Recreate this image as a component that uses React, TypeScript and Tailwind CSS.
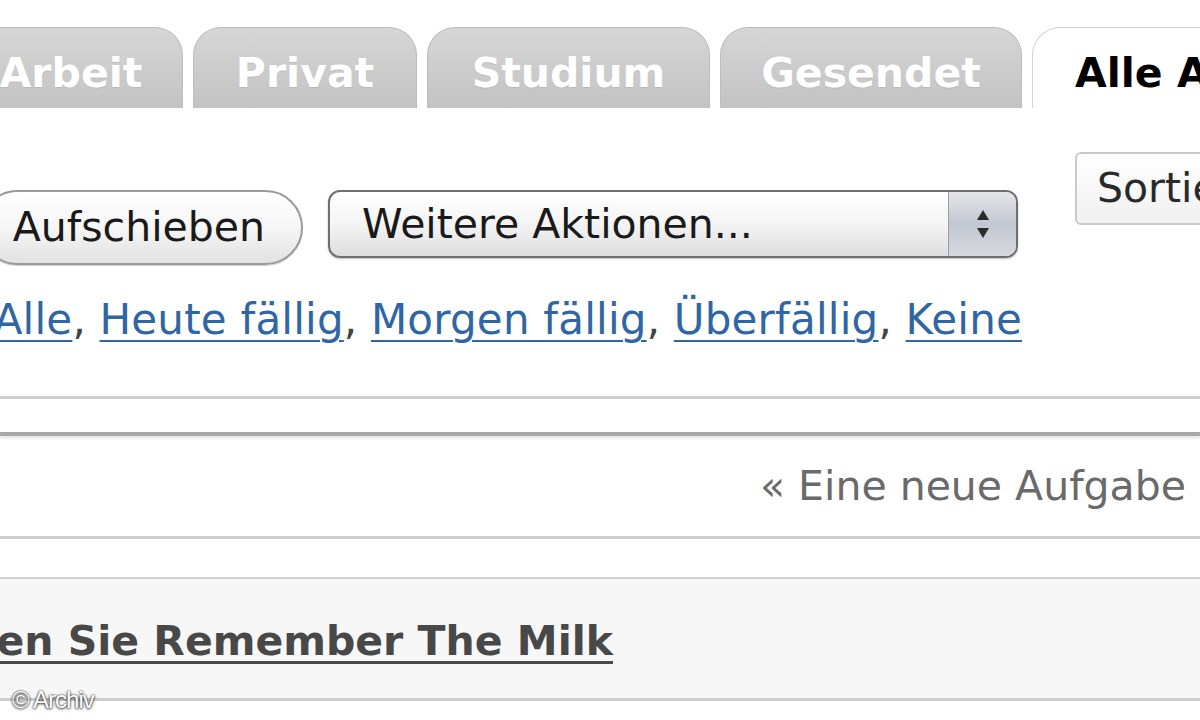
import React from 'react';

const tabs = [
  { label: 'Arbeit', w: 'w-[224px]' },
  { label: 'Privat', w: 'w-[224px]' },
  { label: 'Studium', w: 'w-[283px]' },
  { label: 'Gesendet', w: 'w-[302px]' },
];

const filters = ['Alle', 'Heute fällig', 'Morgen fällig', 'Überfällig', 'Keine'];

function Stepper() {
  return (
    <div className="w-[68px] h-full flex items-center justify-center border-l border-[#9a9ea6] bg-gradient-to-b from-[#e4e6ea] via-[#c3c7cf] to-[#d6d9de]">
      <svg width="18" height="34" viewBox="0 0 18 34">
        <path d="M9 3 L15 13 L3 13 Z" fill="#2b2b2b" />
        <path d="M3 21 L15 21 L9 31 Z" fill="#2b2b2b" />
      </svg>
    </div>
  );
}

export default function App() {
  return (
    <div
      className="relative w-[1200px] h-[720px] bg-white overflow-hidden"
      style={{ fontFamily: '"DejaVu Sans", Verdana, sans-serif' }}
    >
      {/* tab bar */}
      <div className="flex gap-[10px] pt-[27px] -ml-[41px] h-[108px]">
        {tabs.map((t) => (
          <div
            key={t.label}
            className={`${t.w} shrink-0 h-[81px] rounded-t-[28px] border border-b-0 border-[#bdbdbd] bg-gradient-to-b from-[#d6d6d6] to-[#c3c3c3] flex items-center justify-center pt-[10px]`}
          >
            <span className="text-[41px] font-bold text-white leading-none whitespace-nowrap [text-shadow:0_1px_1px_rgba(0,0,0,0.08)]">
              {t.label}
            </span>
          </div>
        ))}
        <div className="w-[300px] shrink-0 h-[81px] rounded-t-[28px] border border-b-0 border-[#d2d2d2] bg-white flex items-center pl-[42px] pt-[10px]">
          <span className="text-[41px] font-bold text-black leading-none whitespace-nowrap">Alle Aufgaben</span>
        </div>
      </div>

      {/* actions */}
      <div className="flex items-start">
        <div className="flex flex-col pt-[82px]">
          <div className="flex gap-[25px] -ml-[20px]">
            <div className="w-[323px] h-[75px] shrink-0 rounded-full border-2 border-[#9a9a9a] bg-gradient-to-b from-white via-[#f6f6f6] to-[#e2e2e2] shadow-[0_1px_1px_rgba(0,0,0,0.2)] flex items-center justify-end pr-[36px]">
              <span className="text-[41px] text-[#1a1a1a] leading-none whitespace-nowrap">Aufschieben</span>
            </div>
            <div className="w-[690px] h-[68px] shrink-0 rounded-[12px] border-2 border-[#6f6f6f] bg-gradient-to-b from-white via-[#f4f4f4] to-[#dedede] shadow-[0_1px_2px_rgba(0,0,0,0.25)] flex items-center overflow-hidden">
              <span className="flex-1 pl-[32px] text-[41px] text-[#1a1a1a] leading-none whitespace-nowrap">
                Weitere Aktionen...
              </span>
              <Stepper />
            </div>
          </div>
          <div className="w-[1022px] h-[50px] mt-[30px] flex justify-end">
            <p className="shrink-0 whitespace-nowrap text-[42px] tracking-[0.2px] leading-[50px] text-[#444]">
              {filters.map((f, i) => (
                <React.Fragment key={f}>
                  <a className="text-[#2f66a3] underline decoration-2 underline-offset-[6px]">{f}</a>
                  {i < filters.length - 1 ? ', ' : ''}
                </React.Fragment>
              ))}
            </p>
          </div>
        </div>
        <div className="ml-[53px] mt-[44px] shrink-0 w-[220px] h-[73px] rounded-[6px] border-2 border-[#cacaca] bg-gradient-to-b from-white to-[#f1f1f1] flex items-center pl-[20px]">
          <span className="text-[41px] text-[#2a2a2a] leading-none whitespace-nowrap">Sortieren</span>
        </div>
      </div>

      {/* list area */}
      <div className="flex flex-col mt-[51px]">
        <div className="h-[3px] bg-[#cfcfcf]" />
        <div className="h-[33px]" />
        <div className="h-[4px] bg-[#a8a8a8] shadow-[0_2px_3px_rgba(0,0,0,0.12)]" />
        <div className="h-[100px] flex items-center pl-[760px]">
          <span className="text-[41px] text-[#6a6a6a] leading-none whitespace-nowrap">« Eine neue Aufgabe hinzufügen</span>
        </div>
        <div className="h-[3px] bg-[#cdcdcd]" />
        <div className="h-[38px]" />
        <div className="h-[2px] bg-[#d2d2d2]" />
        <div className="h-[119px] bg-[#f7f7f7] flex items-center pt-[6px]">
          <div className="w-[613px] flex justify-end">
            <span className="shrink-0 whitespace-nowrap text-[41px] font-bold text-[#484848] leading-none underline decoration-[3px] underline-offset-[6px]">
              Verwenden Sie Remember The Milk
            </span>
          </div>
        </div>
        <div className="h-[3px] bg-[#cdcdcd]" />
      </div>

      <span
        className="absolute left-[12px] top-[682px] text-[24px] text-white tracking-[-1px] [text-shadow:0_0_2px_rgba(0,0,0,0.9),0_1px_3px_rgba(0,0,0,0.7)]"
        style={{ fontFamily: '"Liberation Sans", Arial, sans-serif' }}
      >
        © Archiv
      </span>
    </div>
  );
}
